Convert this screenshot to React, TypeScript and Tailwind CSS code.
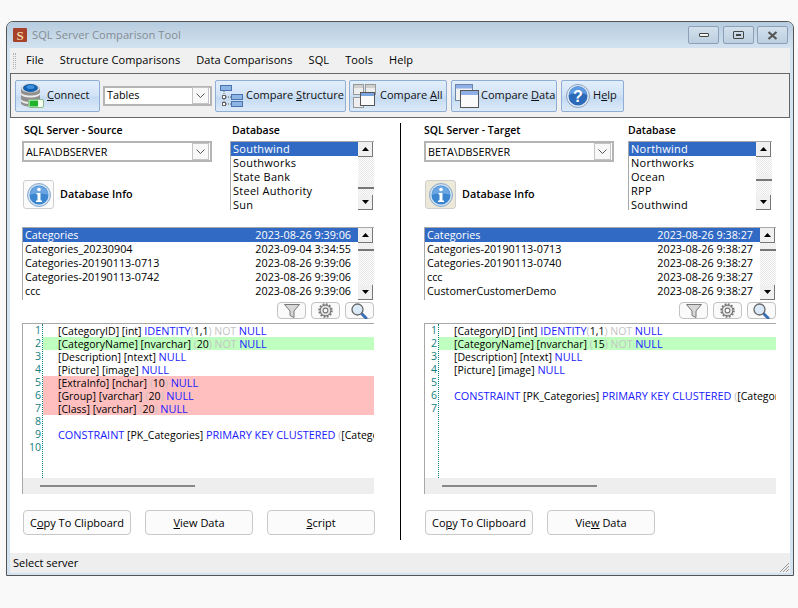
import type { ReactNode } from "react";

const FONT = "font-['Open_Sans','Noto_Sans',sans-serif]";

// ─── Toolbar icons ───
function DbIcon() {
  return (
    <svg width="24" height="25" viewBox="0 0 24 25">
      <path d="M1 4v16c0 2 4 3.500 9.500 3.500S20 22 20 20V4z" fill="#8f8f8f" />
      <path d="M1 9c0 2 4 3.500 9.500 3.500S20 11 20 9v2c0 2-4 3.500-9.500 3.500S1 13 1 11zM1 15.500c0 2 4 3.500 9.500 3.500s9.500-1.500 9.500-3.500v2c0 2-4 3.500-9.500 3.500S1 19.500 1 17.500z" fill="#ececec" />
      <ellipse cx="10.500" cy="5" rx="9.500" ry="4.500" fill="#d8d8d8" />
      <ellipse cx="10.500" cy="5" rx="7.500" ry="4" fill="#1260b0" />
      <ellipse cx="10.500" cy="4" rx="4" ry="2" fill="#3f90dc" />
      <rect x="8.500" y="16.500" width="15" height="8" rx="1.500" fill="#f4fff0" stroke="#8cb88c" />
      <rect x="9.500" y="17.500" width="8.500" height="6" fill="#1fb32e" />
    </svg>
  );
}

function TreeIcon() {
  return (
    <svg width="23" height="22" viewBox="0 0 23 22">
      <path d="M4 6v14M4 12h7M4 19h7" stroke="#666" strokeDasharray="1 1" fill="none" />
      <rect x="0.500" y="0.500" width="11" height="5" fill="#8db4e4" stroke="#4a74ad" />
      <rect x="11.500" y="9.500" width="11" height="5" fill="#8db4e4" stroke="#4a74ad" />
      <rect x="11.500" y="16.500" width="11" height="5" fill="#8db4e4" stroke="#4a74ad" />
      <rect x="2.500" y="10.500" width="3" height="3" fill="#fff" stroke="#666" />
      <rect x="2.500" y="17.500" width="3" height="3" fill="#fff" stroke="#666" />
    </svg>
  );
}

function AllIcon() {
  return (
    <svg width="24" height="24" viewBox="0 0 24 24">
      <g fill="#eee" stroke="#999">
        <rect x="0.500" y="0.500" width="10" height="10" />
        <rect x="12.500" y="0.500" width="10" height="10" />
        <rect x="0.500" y="13.500" width="10" height="10" />
      </g>
      <path d="M1 1h9v3H1zM13 1h9v3h-9z" fill="#cfcfcf" />
      <rect x="7.500" y="8.500" width="14" height="13" fill="#fafafa" stroke="#555" />
      <rect x="8" y="9" width="13" height="3" fill="#7aa5df" />
    </svg>
  );
}

function DataIcon() {
  return (
    <svg width="24" height="24" viewBox="0 0 24 24">
      <rect x="0.500" y="0.500" width="17" height="16" fill="#f2f2f2" stroke="#6d86a8" />
      <rect x="1" y="1" width="16" height="3.500" fill="#8fb0e6" />
      <rect x="5.500" y="6.500" width="18" height="17" fill="#fafafa" stroke="#555" />
      <rect x="6" y="7" width="17" height="4" fill="#8fb0e6" />
    </svg>
  );
}

function HelpIcon() {
  return (
    <svg width="24" height="24" viewBox="0 0 24 24">
      <circle cx="12" cy="12" r="11.500" fill="#dfe9f5" stroke="#8aa0bd" />
      <circle cx="12" cy="12" r="9.500" fill="#2a6ab8" />
      <path d="M3 11a9 9 0 0 1 18 0c-4-3-14-3-18 0z" fill="#5f9be0" />
      <text x="12" y="17.500" textAnchor="middle" fontSize="16" fontWeight="700" fill="#fff" fontFamily="Liberation Sans, sans-serif">?</text>
    </svg>
  );
}

function InfoIcon() {
  return (
    <svg width="24" height="24" viewBox="0 0 24 24">
      <circle cx="12" cy="12" r="11.500" fill="#cfe0f2" stroke="#8aa8cc" />
      <circle cx="12" cy="12" r="9.500" fill="#3c86d0" />
      <path d="M3 12a9 9 0 0 1 18 0c-3-2-15-2-18 0z" fill="#6ba6e2" />
      <circle cx="12" cy="6.500" r="1.800" fill="#fff" />
      <path d="M9.500 10h4v7.500h1.500V19H9v-1.500h1.500V11.500h-1z" fill="#fff" />
    </svg>
  );
}

function FilterIcon() {
  return (
    <svg width="16" height="14" viewBox="0 0 16 14">
      <path d="M0.500 0.500h15L10 7v6.500L6 11.500V7z" fill="#d8d8d8" stroke="#777" />
    </svg>
  );
}

function GearIcon() {
  return (
    <svg width="15" height="15" viewBox="0 0 14 14">
      <circle cx="7" cy="7" r="5" fill="#e6e6e6" stroke="#777" strokeWidth="1" />
      <circle cx="7" cy="7" r="6" fill="none" stroke="#777" strokeWidth="1.600" strokeDasharray="1.700 1.400" />
      <circle cx="7" cy="7" r="2.200" fill="#fff" stroke="#777" />
    </svg>
  );
}

function LensIcon() {
  return (
    <svg width="17" height="16" viewBox="0 0 17 16">
      <path d="M10 10l5 5" stroke="#3a6fb5" strokeWidth="3" strokeLinecap="round" />
      <circle cx="6.500" cy="6.500" r="5.500" fill="#d9e9f7" stroke="#666" strokeWidth="1.300" />
    </svg>
  );
}

function Chevron() {
  return (
    <svg width="9" height="5" viewBox="0 0 9 5">
      <path d="M0.500 0.500l4 4 4-4" fill="none" stroke="#555" />
    </svg>
  );
}

// ─── Small controls ───
function ToolButton({ icon, children, className }: { icon: ReactNode; children: ReactNode; className: string }) {
  return (
    <div
      className={`flex h-[32px] items-center whitespace-nowrap rounded-[2px] border border-[#8eaed6] bg-[linear-gradient(#e2eefb,#d3e4f7_45%,#c4daf2_55%,#dceaf8)] text-[11px] text-[#101010] ${className}`}
    >
      {icon}
      {children}
    </div>
  );
}

function Combo({ text, className, textClass }: { text: string; className: string; textClass?: string }) {
  return (
    <div className={`flex items-center justify-between border-2 border-[#b4b4b4] bg-white pl-[2px] pr-[1px] text-[10.8px] ${className}`}>
      <span className={textClass}>{text}</span>
      <span className="flex h-[17px] w-[17px] items-center justify-center border border-[#c4c4c4] bg-[#f8f8f8]">
        <Chevron />
      </span>
    </div>
  );
}

function ArrowBtn({ down }: { down?: boolean }) {
  return (
    <div className="flex h-[15px] w-[15px] items-center justify-center border-r border-b border-[#777] bg-[#f0f0f0]">
      <svg width="7" height="4" viewBox="0 0 7 4">
        <path d={down ? "M0 0h7L3.500 4z" : "M0 4h7L3.500 0z"} fill="#000" />
      </svg>
    </div>
  );
}

function ScrollBar({ thumbTop }: { thumbTop: string }) {
  return (
    <div className="flex w-[16px] shrink-0 flex-col">
      <ArrowBtn />
      <div className="flex-1 bg-[repeating-conic-gradient(#e6e6e6_0_25%,#ffffff_0_50%)] bg-[length:2px_2px]">
        <div className={`h-[7px] border-b-2 border-[#777] bg-[#f0f0f0] ${thumbTop}`} />
      </div>
      <ArrowBtn down />
    </div>
  );
}

function IconBtn({ children }: { children: ReactNode }) {
  return (
    <div className="flex h-[17px] w-[29px] items-center justify-center rounded-[4px] border border-[#c2c2c2] bg-[#fafafa]">
      {children}
    </div>
  );
}

function PlainButton({ children }: { children: ReactNode }) {
  return (
    <div className="flex h-[25px] w-[108px] items-center justify-center whitespace-nowrap rounded-[4px] border border-[#c8c8c8] bg-[#fbfbfb] text-[11px]">
      <span className="mt-[2px]">{children}</span>
    </div>
  );
}

// ─── Code pane tokens ───
const K = ({ children }: { children: ReactNode }) => <span className="text-[10.9px] text-[#1a1aff]">{children}</span>;
const G = ({ children }: { children: ReactNode }) => <span className="text-[#c4c4c4]">{children}</span>;

type CodeLine = { body?: ReactNode; bg?: string };

function CodePane({ lines, gutterClass }: { lines: CodeLine[]; gutterClass: string }) {
  return (
    <div className="flex h-[171px] w-[352px] flex-col border-t border-l border-[#a8a8a8] bg-white text-[10.5px] leading-[13px]">
      <div className="flex h-[154px] overflow-hidden">
        <div className={`h-full shrink-0 border-r border-dotted border-[#108080] pr-[1px] text-right text-[#108080] ${gutterClass}`}>
          {lines.map((_, i) => (
            <div key={i} className="h-[13px]">{i + 1}</div>
          ))}
        </div>
        <div className="min-w-0 flex-1 overflow-hidden">
          {lines.map((l, i) => (
            <div key={i} className={`h-[13px] whitespace-nowrap pl-[15px] ${l.bg ?? ""}`}>
              {l.body}
            </div>
          ))}
        </div>
      </div>
      <div className="flex h-[16px] items-center bg-[#eeeeee] pl-[17px]">
        <div className="h-[2px] w-[155px] bg-[#888888]" />
      </div>
    </div>
  );
}

const GREEN = "bg-[#bfffbf]";
const RED = "bg-[#ffbfbf]";

const sourceLines: CodeLine[] = [
  { body: <>[CategoryID] [int] <K>IDENTITY</K><G>(</G>1,1<G>) NOT</G> <K>NULL</K></> },
  { bg: GREEN, body: <>[CategoryName] [nvarchar] <G>(</G>20<G>) NOT</G> <K>NULL</K></> },
  { body: <>[Description] [ntext] <K>NULL</K></> },
  { body: <>[Picture] [image] <K>NULL</K></> },
  { bg: RED, body: <>[ExtraInfo] [nchar] <G>(</G>10<G>)</G> <K>NULL</K></> },
  { bg: RED, body: <>[Group] [varchar] <G>(</G>20<G>)</G> <K>NULL</K></> },
  { bg: RED, body: <>[Class] [varchar] <G>(</G>20<G>)</G> <K>NULL</K></> },
  {},
  { body: <><K>CONSTRAINT</K> [PK_Categories] <K>PRIMARY KEY CLUSTERED</K> <G>(</G>[CategoryID]</> },
  {},
];

const targetLines: CodeLine[] = [
  { body: <>[CategoryID] [int] <K>IDENTITY</K><G>(</G>1,1<G>) NOT</G> <K>NULL</K></> },
  { bg: GREEN, body: <>[CategoryName] [nvarchar] <G>(</G>15<G>) NOT</G> <K>NULL</K></> },
  { body: <>[Description] [ntext] <K>NULL</K></> },
  { body: <>[Picture] [image] <K>NULL</K></> },
  {},
  { body: <><K>CONSTRAINT</K> [PK_Categories] <K>PRIMARY KEY CLUSTERED</K> <G>(</G>[CategoryID]</> },
  {},
];

interface PanelProps {
  title: string;
  server: string;
  dbs: string[];
  tables: [string, string][];
  lines: CodeLine[];
  dbGap: string;
  labelIndent: string;
  infoTint: string;
  gutterClass: string;
  dbThumb: string;
  buttons: ReactNode;
}

function Panel(p: PanelProps) {
  return (
    <div className="flex w-[353px] flex-col">
      {/* Server + database pickers */}
      <div className={`flex ${p.dbGap}`}>
        <div className="w-[190px]">
          <div className={`h-[19px] text-[10.5px] font-semibold leading-[16px] ${p.labelIndent}`}>{p.title}</div>
          <Combo text={p.server} textClass="mt-[2px]" className="h-[21px] w-[190px]" />
          <div className="ml-[1px] mt-[18px] flex items-center">
            <div className={`flex h-[29px] w-[31px] items-center justify-center rounded-[3px] border border-[#cfcfcf] ${p.infoTint}`}>
              <InfoIcon />
            </div>
            <span className="ml-[6px] text-[10.8px] font-semibold">Database Info</span>
          </div>
        </div>
        <div className="w-[144px]">
          <div className={`h-[19px] text-[10.5px] font-semibold leading-[16px] ${p.labelIndent}`}>Database</div>
          <div className="flex h-[69px] w-[144px] border-t border-l border-[#a8a8a8] bg-white text-[11px] leading-[14px] tracking-[0.25px]">
            <div className="min-w-0 flex-1">
              {p.dbs.map((d, i) => (
                <div key={d} className={`h-[14px] pl-[2px] ${i === 0 ? "bg-[#316ac5] text-white" : ""}`}>{d}</div>
              ))}
            </div>
            <ScrollBar thumbTop={p.dbThumb} />
          </div>
        </div>
      </div>

      {/* Table list */}
      <div className="mt-[17px] flex h-[73px] w-[352px] border-t border-l border-[#a8a8a8] bg-white text-[10.8px] leading-[14px]">
        <div className="min-w-0 flex-1">
          {p.tables.map(([name, date], i) => (
            <div key={name} className={`flex h-[14px] justify-between pl-[2px] pr-[7px] ${i === 0 ? "bg-[#316ac5] text-white" : ""}`}>
              <span>{name}</span>
              <span>{date}</span>
            </div>
          ))}
        </div>
        <ScrollBar thumbTop="mt-[1px]" />
      </div>

      <div className="mt-[2px] flex w-[352px] justify-end gap-[5px]">
        <IconBtn><FilterIcon /></IconBtn>
        <IconBtn><GearIcon /></IconBtn>
        <IconBtn><LensIcon /></IconBtn>
      </div>

      <div className="mt-[4px]">
        <CodePane lines={p.lines} gutterClass={p.gutterClass} />
      </div>

      <div className="ml-[1px] mt-[16px] flex gap-[14px]">{p.buttons}</div>
    </div>
  );
}

function WinBtn({ children }: { children: ReactNode }) {
  return (
    <div className="flex h-[18px] w-[31px] items-center justify-center rounded-[2px] border border-[#8ba0b8] bg-[linear-gradient(#d3e0ec,#bccfe0)]">
      {children}
    </div>
  );
}

export default function App() {
  return (
    <div className={`h-[608px] w-[798px] overflow-hidden bg-[#f9f9f9] pl-[6px] pt-[21px] text-black ${FONT}`}>
      <div className="flex h-[555px] w-[788px] flex-col overflow-hidden rounded-t-[7px] border border-[#555555] bg-[#d3e3f1]">
        {/* Title bar */}
        <div className="flex h-[26px] shrink-0 items-center justify-between bg-[linear-gradient(#b6ccdf,#d3e2ef)] pl-[6px] pr-[5px]">
          <div className="flex items-center gap-[5px]">
            <svg width="14" height="14" viewBox="0 0 14 14">
              <rect width="14" height="14" rx="1" fill="#a8412a" />
              <text x="7" y="12" textAnchor="middle" fontSize="13" fontWeight="700" fill="#f0d9a8" fontFamily="Liberation Serif, serif">S</text>
            </svg>
            <span className="text-[11.2px] text-[#858c93]">SQL Server Comparison Tool</span>
          </div>
          <div className="flex gap-[3.5px]">
            <WinBtn><div className="h-[4px] w-[10px] rounded-[1px] border border-[#444] bg-[#f4f4f4]" /></WinBtn>
            <WinBtn><div className="flex h-[8px] w-[11px] items-center justify-center rounded-[1px] border border-[#444]"><div className="h-[2px] w-[5px] border border-[#444]" /></div></WinBtn>
            <WinBtn>
              <svg width="11" height="9" viewBox="0 0 11 9"><path d="M1.500 1l8 7M9.500 1l-8 7" stroke="#555" strokeWidth="2.200" /></svg>
            </WinBtn>
          </div>
        </div>

        <div className="mx-[3px] flex min-h-0 flex-1 flex-col">
          {/* Menu */}
          <div className="flex h-[25px] shrink-0 items-center bg-[#f0f0f0] pl-[3px] text-[11px] tracking-[0.1px]">
            <div className="h-[16px] w-[3px] border-x border-dotted border-[#b0b0b0]" />
            <div className="ml-[10px] flex gap-[16px]">
              <span>File</span>
              <span>Structure Comparisons</span>
              <span>Data Comparisons</span>
              <span>SQL</span>
              <span>Tools</span>
              <span>Help</span>
            </div>
          </div>

          {/* Toolbar */}
          <div className="flex h-[45px] shrink-0 items-center gap-[3px] border border-[#666666] bg-[#f0f0f0] pl-[4px]">
            <ToolButton className="w-[85px] pl-[4px]" icon={<DbIcon />}>
              <span className="ml-[3px]"><u>C</u>onnect</span>
            </ToolButton>
            <Combo text="Tables" className="h-[20px] w-[109px]" />
            <ToolButton className="w-[131px] pl-[4px]" icon={<TreeIcon />}>
              <span className="ml-[3px]">Compare <u>S</u>tructure</span>
            </ToolButton>
            <ToolButton className="w-[98px] pl-[3px]" icon={<AllIcon />}>
              <span className="ml-[3px]">Compare <u>A</u>ll</span>
            </ToolButton>
            <ToolButton className="ml-[1px] w-[106px] pl-[3px]" icon={<DataIcon />}>
              <span className="ml-[2px]">Compare <u>D</u>ata</span>
            </ToolButton>
            <ToolButton className="ml-[1px] w-[63px] pl-[4px]" icon={<HelpIcon />}>
              <span className="ml-[3px]">H<u>e</u>lp</span>
            </ToolButton>
          </div>

          {/* Two compare panels */}
          <div className="flex min-h-0 flex-1 bg-white">
            <div className="w-[390px] shrink-0 pl-[12px] pt-[4px]">
              <Panel
                title="SQL Server - Source"
                server="ALFA\DBSERVER"
                dbs={["Southwind", "Southworks", "State Bank", "Steel Authority", "Sun"]}
                tables={[
                  ["Categories", "2023-08-26 9:39:06"],
                  ["Categories_20230904", "2023-09-04 3:34:55"],
                  ["Categories-20190113-0713", "2023-08-26 9:39:06"],
                  ["Categories-20190113-0742", "2023-08-26 9:39:06"],
                  ["ccc", "2023-08-26 9:39:06"],
                ]}
                lines={sourceLines}
                dbGap="gap-[18px]"
                labelIndent="ml-[2px]"
                infoTint="bg-[#fbfbfb]"
                gutterClass="w-[20px]"
                dbThumb="mt-[25px]"
                buttons={
                  <>
                    <PlainButton>C<u>o</u>py To Clipboard</PlainButton>
                    <PlainButton><u>V</u>iew Data</PlainButton>
                    <PlainButton><u>S</u>cript</PlainButton>
                  </>
                }
              />
            </div>
            <div className="mt-[5px] h-[417px] w-[1px] shrink-0 bg-black" />
            <div className="flex-1 pl-[23px] pt-[4px]">
              <Panel
                title="SQL Server - Target"
                server="BETA\DBSERVER"
                dbs={["Northwind", "Northworks", "Ocean", "RPP", "Southwind"]}
                tables={[
                  ["Categories", "2023-08-26 9:38:27"],
                  ["Categories-20190113-0713", "2023-08-26 9:38:27"],
                  ["Categories-20190113-0740", "2023-08-26 9:38:27"],
                  ["ccc", "2023-08-26 9:38:27"],
                  ["CustomerCustomerDemo", "2023-08-26 9:38:27"],
                ]}
                lines={targetLines}
                dbGap="gap-[14px]"
                labelIndent=""
                infoTint="bg-[#ece9d8]"
                gutterClass="w-[14px]"
                dbThumb="mt-[17px]"
                buttons={
                  <>
                    <PlainButton>Co<u>p</u>y To Clipboard</PlainButton>
                    <PlainButton>Vie<u>w</u> Data</PlainButton>
                  </>
                }
              />
            </div>
          </div>

          {/* Status bar */}
          <div className="flex h-[20px] shrink-0 items-center justify-between bg-[#eeeeee] pl-[3px] text-[11px]">
            <span>Select server</span>
            <svg width="12" height="12" viewBox="0 0 12 12" className="self-end">
              <path d="M11 2l-9 9M11 5l-6 6M11 8l-3 3" stroke="#999" strokeWidth="1" />
            </svg>
          </div>
          <div className="h-[2px] shrink-0" />
        </div>
      </div>
    </div>
  );
}
